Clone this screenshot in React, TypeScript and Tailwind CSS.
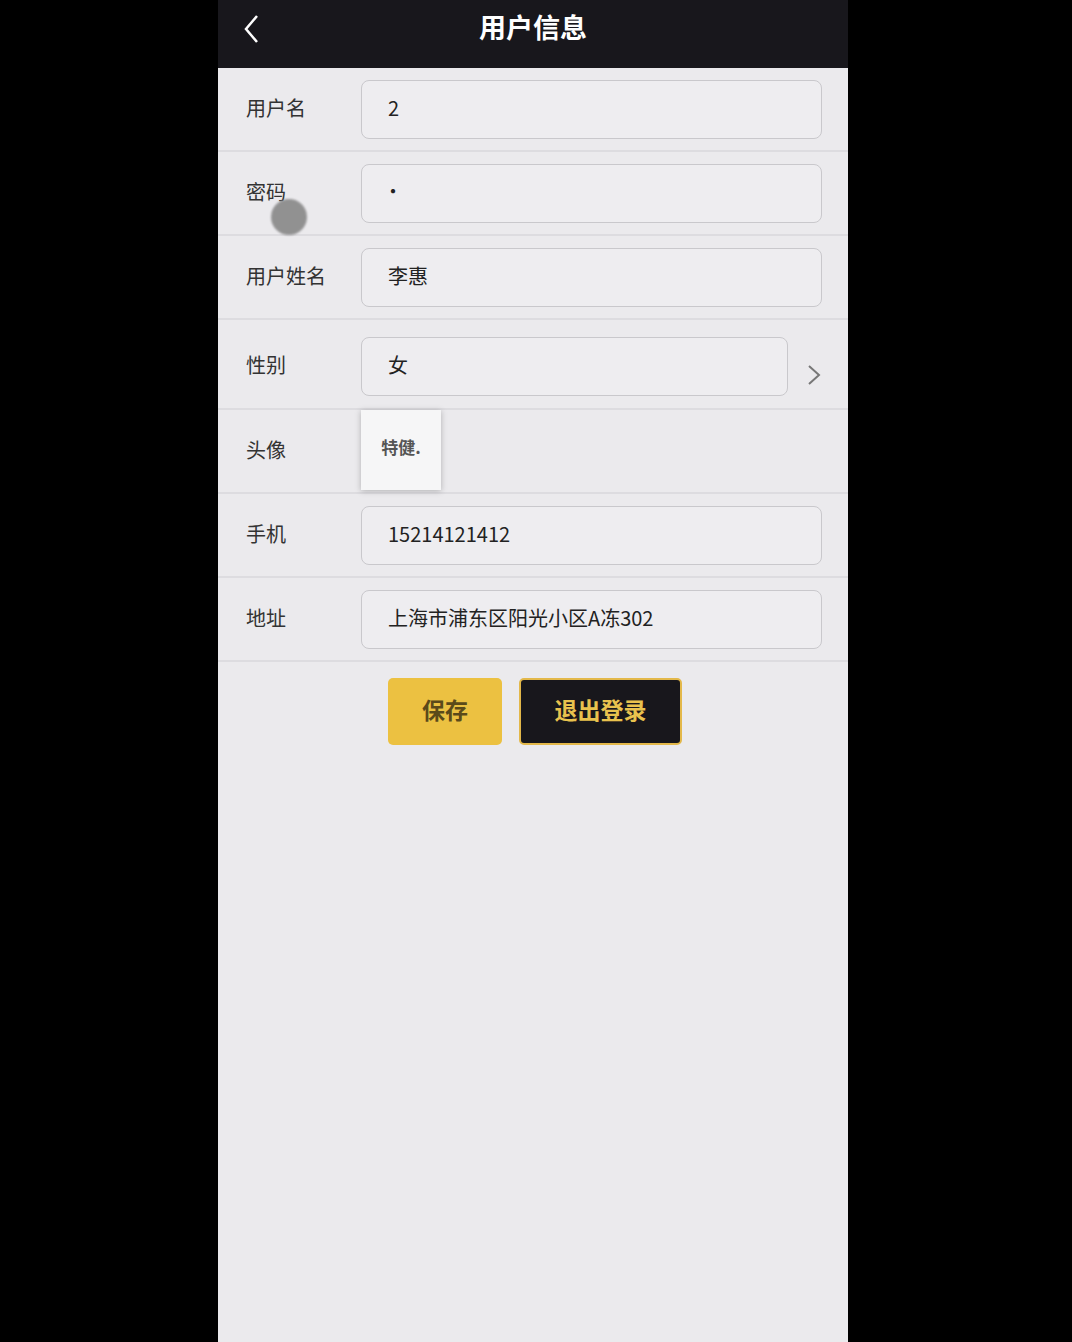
import * as React from 'react';

type Field = { label: string; value: string; kind?: 'select' | 'avatar' | 'password' };

const fields: Field[] = [
  { label: '用户名', value: '2' },
  { label: '密码', value: '•', kind: 'password' },
  { label: '用户姓名', value: '李惠' },
  { label: '性别', value: '女', kind: 'select' },
  { label: '头像', value: '特健.', kind: 'avatar' },
  { label: '手机', value: '15214121412' },
  { label: '地址', value: '上海市浦东区阳光小区A冻302' },
];

const FONT = "font-['Microsoft_YaHei','Noto_Sans_CJK_SC',sans-serif]";

const Row: React.FC<{ field: Field }> = ({ field }) => {
  const tall = field.kind === 'select';
  return (
    <div
      className={`relative flex items-center border-b-2 border-[#dddce0] pl-[28px] pr-[26px] ${
        tall ? 'h-[90px] pt-[4px]' : 'h-[84px]'
      }`}
    >
      <span className="-mt-[2px] w-[115px] shrink-0 text-[20px] text-[#333]">{field.label}</span>
      {field.kind === 'avatar' ? (
        <div className="flex h-[80px] w-[80px] items-center justify-center self-start bg-[#f6f6f7] shadow-[0_1px_6px_rgba(0,0,0,0.25)]">
          <span className="-mt-[6px] text-[17px] font-bold text-[#555]">{field.value}</span>
        </div>
      ) : (
        <div className="flex flex-1 items-center">
          <div className="flex h-[59px] flex-1 items-center rounded-[8px] border border-[#c9c8cc] bg-[#eeedf0] px-[26px] text-[20px] text-[#222]">
            <span className={field.kind === 'password' ? '-ml-[5px] -mt-[4px]' : '-mt-[2px]'}>{field.value}</span>
          </div>
          {field.kind === 'select' && (
            <svg viewBox="0 0 16 24" className="ml-[18px] mt-[18px] h-[24px] w-[16px]">
              <path d="M3 3 L13 12 L3 21" fill="none" stroke="#777" strokeWidth="2" />
            </svg>
          )}
        </div>
      )}
      {field.kind === 'password' && (
        <div className="absolute left-[53px] top-[47px] h-[36px] w-[36px] rounded-full bg-[#888] opacity-90 blur-[1px]" />
      )}
    </div>
  );
};

export default function App() {
  return (
    <div className={`min-h-[1342px] w-full bg-black pl-[218px] ${FONT}`}>
      <div className="flex min-h-[1342px] w-[630px] flex-col bg-[#ebeaed]">
        <div className="relative flex h-[68px] items-center justify-center bg-[#18171c]">
          <svg viewBox="0 0 20 30" className="absolute left-[24px] top-[14px] h-[30px] w-[20px]">
            <path d="M15 2 L4 15 L15 28" fill="none" stroke="#fff" strokeWidth="2.5" />
          </svg>
          <span className="-mt-[14px] text-[27px] font-bold text-white">用户信息</span>
        </div>
        {fields.map((f) => (
          <Row key={f.label} field={f} />
        ))}
        <div className="flex justify-center gap-[17px] pt-[16px] pl-[4px]">
          <button className="h-[67px] w-[114px] rounded-[5px] bg-[#ecc141] pb-[4px] text-[23px] font-bold text-[#5b4a1a]">
            保存
          </button>
          <button className="h-[67px] w-[163px] rounded-[5px] border-2 border-[#e3b84a] bg-[#18171c] pb-[4px] text-[23px] font-bold text-[#e9c24e]">
            退出登录
          </button>
        </div>
      </div>
    </div>
  );
}
